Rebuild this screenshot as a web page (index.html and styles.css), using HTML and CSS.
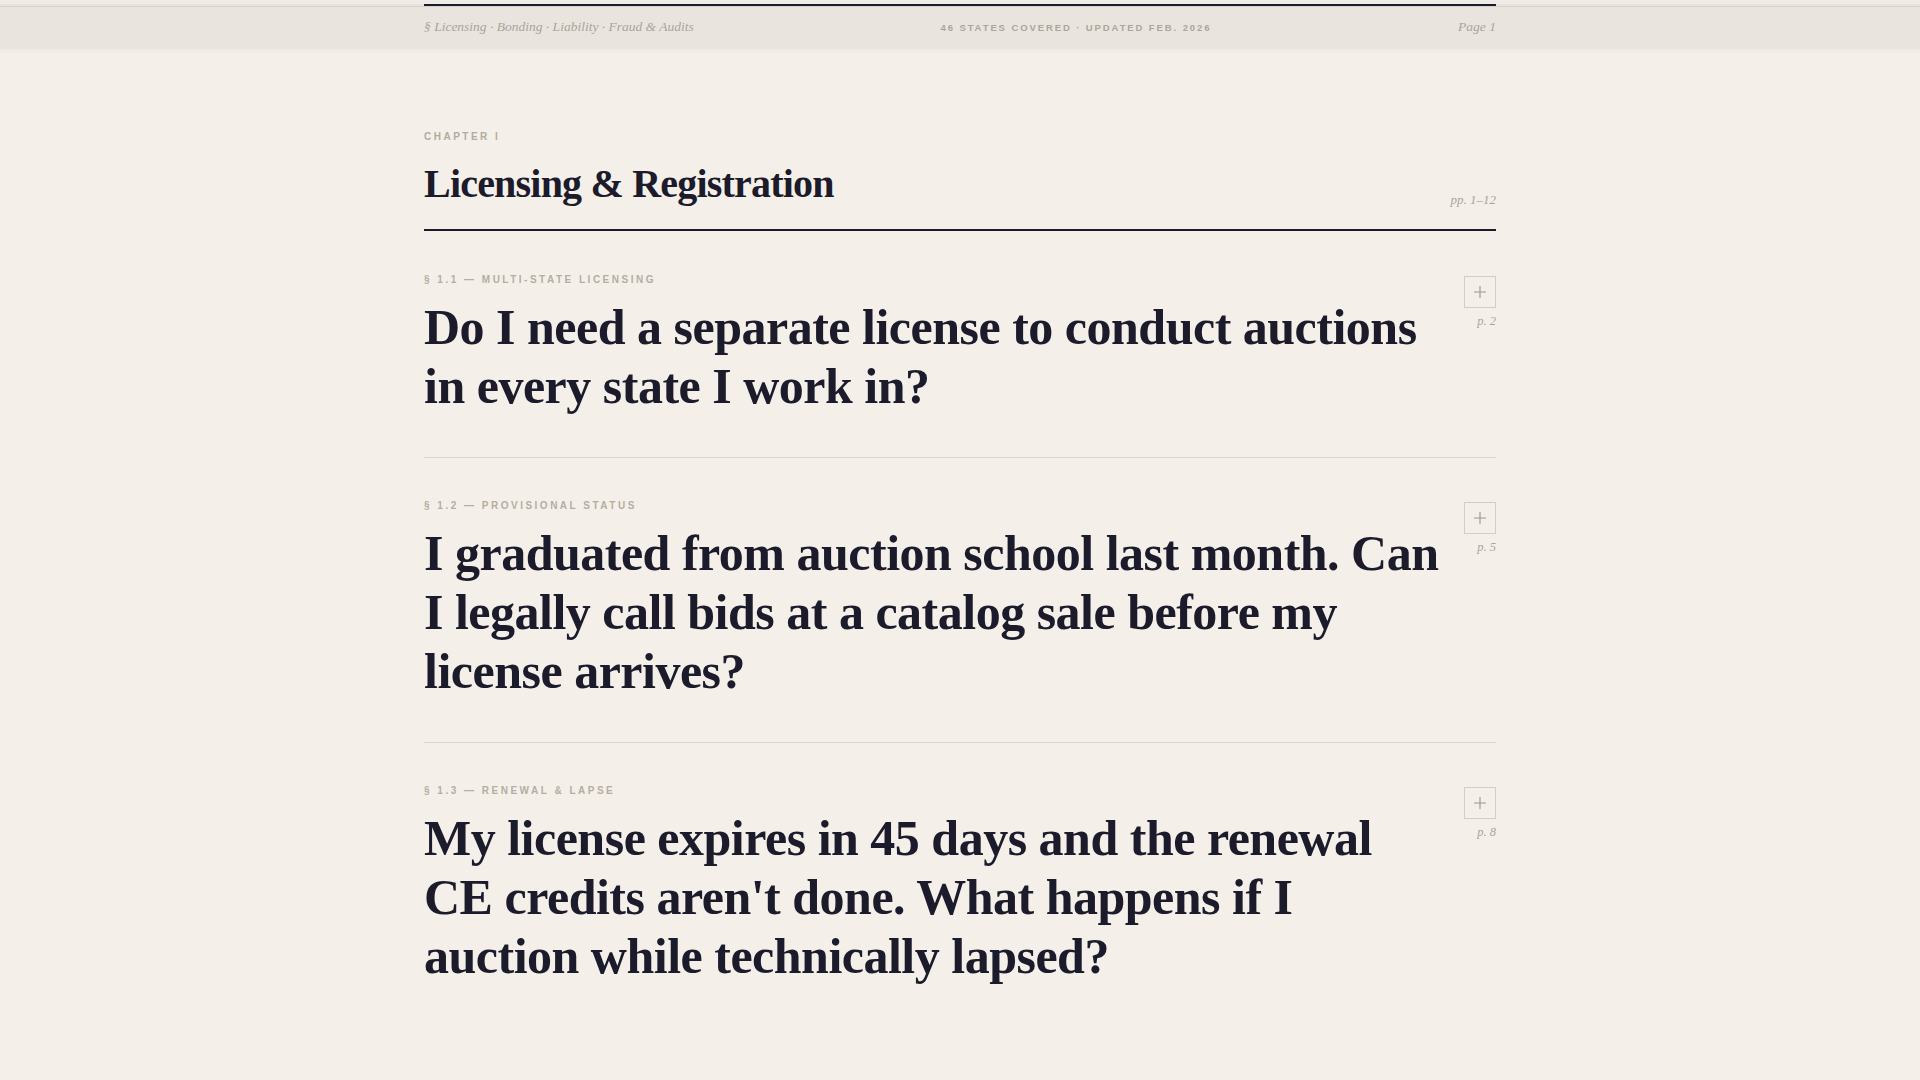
FILE: index.html
```html
<!DOCTYPE html>
<html lang="en">
<head>
<meta charset="utf-8">
<title>Licensing &amp; Registration</title>
<link rel="stylesheet" href="styles.css">
</head>
<body>
<header class="topbar">
  <div class="topbar-inner">
    <span class="tb-left">§ Licensing · Bonding · Liability · Fraud &amp; Audits</span>
    <span class="tb-mid">46 States Covered · Updated Feb. 2026</span>
    <span class="tb-right">Page 1</span>
  </div>
</header>
<main class="page">
  <section class="chapter">
    <div class="chapter-head">
      <div class="chapter-titles">
        <div class="chapter-label">Chapter I</div>
        <h1 class="chapter-title">Licensing &amp; Registration</h1>
      </div>
      <div class="chapter-pages">pp. 1–12</div>
    </div>

    <article class="qa">
      <div class="qa-main">
        <div class="qa-label">§ 1.1 — Multi-State Licensing</div>
        <h2 class="qa-q">Do I need a separate license to conduct auctions in every state I work in?</h2>
      </div>
      <div class="qa-side">
        <button class="qa-toggle" type="button" aria-label="Expand"><svg viewBox="0 0 14 14" width="14" height="14"><path d="M7 1v12M1 7h12" /></svg></button>
        <span class="qa-page">p. 2</span>
      </div>
    </article>

    <article class="qa">
      <div class="qa-main">
        <div class="qa-label">§ 1.2 — Provisional Status</div>
        <h2 class="qa-q">I graduated from auction school last month. Can I legally call bids at a catalog sale before my license arrives?</h2>
      </div>
      <div class="qa-side">
        <button class="qa-toggle" type="button" aria-label="Expand"><svg viewBox="0 0 14 14" width="14" height="14"><path d="M7 1v12M1 7h12" /></svg></button>
        <span class="qa-page">p. 5</span>
      </div>
    </article>

    <article class="qa">
      <div class="qa-main">
        <div class="qa-label">§ 1.3 — Renewal &amp; Lapse</div>
        <h2 class="qa-q">My license expires in 45 days and the renewal CE credits aren't done. What happens if I auction while technically lapsed?</h2>
      </div>
      <div class="qa-side">
        <button class="qa-toggle" type="button" aria-label="Expand"><svg viewBox="0 0 14 14" width="14" height="14"><path d="M7 1v12M1 7h12" /></svg></button>
        <span class="qa-page">p. 8</span>
      </div>
    </article>
  </section>
</main>
</body>
</html>
```

FILE: styles.css
```css
* { box-sizing: border-box; }

html, body {
  margin: 0;
  padding: 0;
  background: #f4f0e9;
  color: #1b1b2b;
  font-family: "Liberation Serif", "Times New Roman", serif;
}

.topbar {
  padding-top: 4px;
  background: linear-gradient(to bottom, #efece7 0, #efece7 4px, #e8e4dd 4px, #e8e4dd 6px, #d8d3cb 6px, #d8d3cb 7px, #e9e5de 7px);
  box-shadow: 0 1px 0 #efebe5, 0 2px 3px rgba(120, 110, 90, 0.05);
}

.topbar-inner {
  width: 1072px;
  margin: 0 auto;
  height: 45px;
  border-top: 2px solid #1b1b2b;
  display: flex;
  justify-content: space-between;
  align-items: center;
  padding-bottom: 1px;
}

.tb-left,
.tb-right {
  font-family: "Liberation Serif", "Times New Roman", serif;
  font-style: italic;
  font-size: 13.5px;
  color: #aaa49a;
}

.tb-mid {
  font-family: "Liberation Sans", Arial, sans-serif;
  font-weight: 700;
  font-size: 9.5px;
  letter-spacing: 0.2em;
  text-transform: uppercase;
  color: #aba59b;
}

.page {
  width: 1072px;
  margin: 0 auto;
  padding: 81px 0 60px;
}

.chapter-head {
  display: flex;
  justify-content: space-between;
  align-items: flex-end;
  padding-bottom: 21px;
  border-bottom: 2px solid #1b1b2b;
}

.chapter-label {
  font-family: "Liberation Sans", Arial, sans-serif;
  font-weight: 700;
  font-size: 10px;
  line-height: 14px;
  letter-spacing: 0.25em;
  text-transform: uppercase;
  color: #b2aba0;
}

.chapter-title {
  margin: 16px 0 0;
  font-size: 40px;
  line-height: 48px;
  font-weight: 700;
  letter-spacing: -0.02em;
  color: #1b1b2b;
}

.chapter-pages {
  font-style: italic;
  font-size: 13px;
  line-height: 16px;
  color: #aaa49a;
}

.qa {
  display: grid;
  grid-template-columns: 1fr 32px;
  column-gap: 24px;
  padding: 42px 0 41px;
  border-bottom: 1px solid #dcd6cc;
}

.qa + .qa {
  padding-top: 41px;
}

.qa:last-child {
  border-bottom: none;
}

.qa-label {
  font-family: "Liberation Sans", Arial, sans-serif;
  font-weight: 700;
  font-size: 10px;
  line-height: 14px;
  letter-spacing: 0.25em;
  text-transform: uppercase;
  color: #b4ada2;
}

.qa-q {
  margin: 11px 0 0;
  font-size: 50px;
  line-height: 59px;
  font-weight: 700;
  letter-spacing: -0.01em;
  color: #1b1b2b;
}

.qa-side {
  display: flex;
  flex-direction: column;
  align-items: flex-end;
  padding-top: 3px;
}

.qa-toggle {
  width: 32px;
  height: 32px;
  padding: 0;
  margin: 0;
  border: 1px solid #d3cdc3;
  background: transparent;
  display: flex;
  align-items: center;
  justify-content: center;
  cursor: pointer;
}

.qa-toggle svg path {
  stroke: #9c978f;
  stroke-width: 1.1;
  fill: none;
}

.qa-page {
  margin-top: 6px;
  font-style: italic;
  font-size: 12.5px;
  line-height: 14px;
  color: #aaa49a;
}
```
